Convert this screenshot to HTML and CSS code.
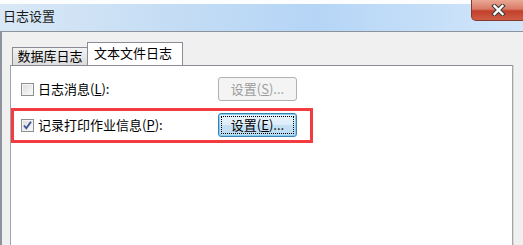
FILE: index.html
```html
<!DOCTYPE html>
<html lang="zh-CN">
  <head>
    <meta charset="UTF-8" />
    <meta name="viewport" content="width=device-width, initial-scale=1.0" />
    <title>日志设置</title>
    <link rel="stylesheet" href="styles.css">
  </head>
  <body>
    <div class="window">
      <header class="titlebar">
        <span class="title">日志设置</span>
        <span class="close">
          <svg width="15" height="12" viewBox="0 0 15 12">
            <path d="M3.5 2 L11.5 10 M11.5 2 L3.5 10" stroke="#3a3a3a" stroke-width="4.4" stroke-linecap="square" />
            <path d="M3.5 2 L11.5 10 M11.5 2 L3.5 10" stroke="#ffffff" stroke-width="2.4" stroke-linecap="square" />
          </svg>
        </span>
      </header>

      <div class="frame">
        <div class="tabs">
          <div class="tab">数据库日志</div>
          <div class="tab active">文本文件日志</div>
        </div>

        <div class="panel">
          <div class="row">
            <label class="check">
              <span class="box"></span>
              日志消息(<u>L</u>):
            </label>
            <button class="btn" disabled>设置(<u>S</u>)...</button>
          </div>
          <div class="row">
            <label class="check">
              <span class="box">
                <svg width="11" height="11" viewBox="0 0 11 11">
                  <path d="M2 5.5 L4.3 8.3 L9 1.8" fill="none" stroke="#3d5597" stroke-width="1.9" />
                </svg>
              </span>
              记录打印作业信息(<u>P</u>):
            </label>
            <button class="btn default"><span class="focus">设置(<u>E</u>)...</span></button>
          </div>

          <!-- 标注框 -->
          <div class="mark"></div>
        </div>
      </div>
    </div>
  </body>
</html>
```

FILE: styles.css
```css
body {
  margin: 0px;
  background-color: #ffffff;
  overflow: hidden;
  font-family: "Noto Sans CJK SC", "Noto Sans", sans-serif;
  font-size: 13px;
  color: #000000;
}

.window {
  width: 523px;
}

.titlebar {
  height: 31px;
  display: flex;
  align-items: center;
  padding-left: 3px;
  background:
    linear-gradient(to bottom, #fbfdff 0px, #fbfdff 4px, transparent 4px),
    linear-gradient(to right, #d9e8f6 0%, #c3dcf4 35%, #b5d5f6 60%, #d2e6fa 100%);
}

.title {
  line-height: 16px;
  color: #1b1b1b;
}

.close {
  margin-left: auto;
  align-self: flex-start;
  width: 52px;
  height: 20px;
  margin-right: -2px;
  border: 1px solid #84392d;
  border-top: 0px;
  border-radius: 0px 0px 0px 5px;
  background: linear-gradient(to bottom, #e9a996 0%, #d97a66 45%, #c23f2b 55%, #cf5d45 100%);
  display: flex;
  align-items: center;
  justify-content: center;
}

.frame {
  background-color: #f0f0f0;
  border-top: 1px solid #8c939c;
  border-left: 2px solid #8c939c;
  padding: 10px 0px 0px 8px;
  height: 203px;
}

.tabs {
  display: flex;
  align-items: flex-end;
  margin-left: 2px;
}

.tab {
  box-sizing: border-box;
  height: 18px;
  width: 76px;
  border: 1px solid #898c95;
  border-bottom: 0px;
  background: linear-gradient(to bottom, #f2f2f2, #dcdcdc);
  text-align: center;
  line-height: 16px;
}

.tab.active {
  position: relative;
  height: 24px;
  width: 96px;
  margin-left: -1px;
  margin-bottom: -1px;
  background: #ffffff;
  line-height: 20px;
  text-align: left;
  padding-left: 6px;
}

.panel {
  position: relative;
  box-sizing: border-box;
  width: 503px;
  height: 180px;
  background-color: #ffffff;
  border: 1px solid #898c95;
  border-bottom: 0px;
  border-left-color: #9ea3ae;
  border-right-color: #a5a5a5;
  box-shadow: 1px 0px 0px #d9d9d9;
  padding: 11px 0px 0px 10px;
}

.row {
  display: flex;
  align-items: center;
  height: 24px;
  margin-bottom: 12px;
}

.check {
  width: 197px;
  display: flex;
  align-items: center;
  line-height: 16px;
}

.box {
  box-sizing: border-box;
  width: 13px;
  height: 13px;
  margin-right: 4px;
  border: 1px solid #8e8f8f;
  background: linear-gradient(135deg, #dcdcdc, #fbfbfb);
  box-shadow: inset 0px 0px 0px 1px #f4f4f4;
  display: flex;
  align-items: center;
  justify-content: center;
}

.btn {
  box-sizing: border-box;
  width: 79px;
  height: 24px;
  padding: 0px;
  border: 1px solid #adb2b5;
  border-radius: 3px;
  background: #f4f4f4;
  color: #9c9c9c;
  font-family: inherit;
  font-size: 13px;
  line-height: 16px;
}

.btn.default {
  border-color: #3c7fb1;
  background: linear-gradient(to bottom, #eaf5fc 0%, #dcecf8 50%, #c6e1f4 52%, #bcdcf2 100%);
  box-shadow: inset 0px 0px 0px 1px #86cfef;
  color: #000000;
  padding: 2px;
}

.focus {
  display: block;
  height: 100%;
  box-sizing: border-box;
  border: 1px dotted #000000;
  line-height: 16px;
}

.mark {
  position: absolute;
  left: 0px;
  top: 42px;
  width: 302px;
  height: 35px;
  box-sizing: border-box;
  border: 3px solid #f23c3f;
}
```
